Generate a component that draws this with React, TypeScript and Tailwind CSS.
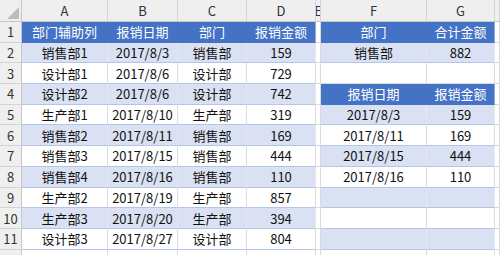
const cols = [
  { key: "A", w: "w-[86px]" },
  { key: "B", w: "w-[70px]" },
  { key: "C", w: "w-[69px]" },
  { key: "D", w: "w-[69px]" },
  { key: "E", w: "w-[5px]" },
  { key: "F", w: "w-[106px]" },
  { key: "G", w: "w-[68px]" },
  { key: "H", w: "flex-1" },
];

type Kind = "head" | "band" | "plain" | "grid";

const left: string[][] = [
  ["部门辅助列", "报销日期", "部门", "报销金额"],
  ["销售部1", "2017/8/3", "销售部", "159"],
  ["设计部1", "2017/8/6", "设计部", "729"],
  ["设计部2", "2017/8/6", "设计部", "742"],
  ["生产部1", "2017/8/10", "生产部", "319"],
  ["销售部2", "2017/8/11", "销售部", "169"],
  ["销售部3", "2017/8/15", "销售部", "444"],
  ["销售部4", "2017/8/16", "销售部", "110"],
  ["生产部2", "2017/8/19", "生产部", "857"],
  ["生产部3", "2017/8/20", "生产部", "394"],
  ["设计部3", "2017/8/27", "设计部", "804"],
];

// right side: [kind, F, G]
const right: [Kind, string, string][] = [
  ["head", "部门", "合计金额"],
  ["band", "销售部", "882"],
  ["grid", "", ""],
  ["head", "报销日期", "报销金额"],
  ["band", "2017/8/3", "159"],
  ["plain", "2017/8/11", "169"],
  ["band", "2017/8/15", "444"],
  ["plain", "2017/8/16", "110"],
  ["band", "", ""],
  ["plain", "", ""],
  ["band", "", ""],
];

function kindClass(kind: Kind, edge: boolean) {
  const r = edge ? "border-r-[#8ea9db]" : "";
  if (kind === "head")
    return `bg-[#4472c4] text-white border-b border-b-[#4472c4] border-r ${edge ? "border-r-[#8ea9db]" : "border-r-[#4472c4]"}`;
  if (kind === "band")
    return `bg-[#d9e1f2] text-[#111] border-b border-b-[#b4c6e7] border-r border-r-[#e6e9f0] ${r}`;
  if (kind === "plain")
    return `bg-white text-[#111] border-b border-b-[#b4c6e7] border-r border-r-[#dcdcdc] ${r}`;
  return "bg-white border-b border-b-[#dadada] border-r border-r-[#dadada]";
}

function Cell({
  w,
  kind,
  edge = false,
  children,
}: {
  w: string;
  kind: Kind;
  edge?: boolean;
  children?: React.ReactNode;
}) {
  return (
    <div
      className={`${w} shrink-0 h-full flex items-center justify-center overflow-hidden whitespace-nowrap ${kindClass(kind, edge)}`}
    >
      {children}
    </div>
  );
}

export default function App() {
  return (
    <div className="w-[500px] h-[255px] overflow-hidden bg-white font-['Noto_Sans_CJK_SC',sans-serif] text-[13px] leading-none">
      {/* column letters */}
      <div className="flex h-[22px] bg-[#efefef] text-[#333]">
        <div className="w-[22px] shrink-0 relative border-r border-b border-[#c8c8c8]">
          <svg className="absolute right-[2px] bottom-[2px]" width="12" height="12" viewBox="0 0 12 12">
            <polygon points="12,0 12,12 0,12" fill="#bdbdbd" />
          </svg>
        </div>
        {cols.map((c) => (
          <div
            key={c.key}
            className={`${c.w} shrink-0 flex items-center justify-center overflow-hidden border-r border-b border-r-[#d4d4d4] border-b-[#c8c8c8]`}
          >
            {c.key === "H" ? "" : c.key}
          </div>
        ))}
      </div>

      {left.map((row, i) => {
        const lk: Kind = i === 0 ? "head" : i % 2 === 1 ? "band" : "plain";
        const [rk, f, g] = right[i];
        return (
          <div key={i} className="flex h-[20.7px]">
            <div className="w-[22px] shrink-0 h-full bg-[#efefef] text-[#333] flex items-center justify-center border-r border-b border-r-[#c8c8c8] border-b-[#d4d4d4]">
              {i + 1}
            </div>
            <Cell w="w-[86px]" kind={lk}>{row[0]}</Cell>
            <Cell w="w-[70px]" kind={lk}>{row[1]}</Cell>
            <Cell w="w-[69px]" kind={lk}>{row[2]}</Cell>
            <Cell w="w-[69px]" kind={lk} edge>{row[3]}</Cell>
            <Cell w="w-[5px]" kind="grid" />
            <Cell w="w-[106px]" kind={rk}>{f}</Cell>
            <Cell w="w-[68px]" kind={rk} edge>{g}</Cell>
            <Cell w="flex-1" kind="grid" />
          </div>
        );
      })}

      {/* sliver of the next row */}
      <div className="flex h-[20.7px]">
        <div className="w-[22px] shrink-0 h-full bg-[#efefef] border-r border-r-[#c8c8c8]" />
        {cols.map((c) => (
          <div key={c.key} className={`${c.w} shrink-0 h-full border-r border-r-[#dadada]`} />
        ))}
      </div>
    </div>
  );
}
